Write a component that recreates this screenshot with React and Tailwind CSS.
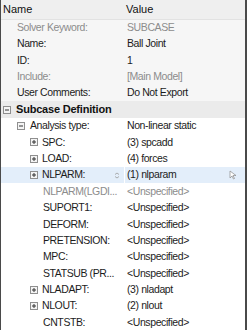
import React from 'react'

const FONT = { fontFamily: '"Liberation Sans", Arial, sans-serif' }

function Expander({ open }) {
  return (
    <svg width="8" height="8" viewBox="0 0 8 8" className="shrink-0">
      <rect x="0.5" y="0.5" width="7" height="7" fill="#f4f4f4" stroke="#8f8f8f" />
      <path d="M2 4h4" stroke="#333" strokeWidth="1" />
      {!open && <path d="M4 2v4" stroke="#333" strokeWidth="1" />}
    </svg>
  )
}

const top = [
  { label: 'Solver Keyword:', value: 'SUBCASE', dim: true },
  { label: 'Name:', value: 'Ball Joint' },
  { label: 'ID:', value: '1' },
  { label: 'Include:', value: '[Main Model]', dim: true },
  { label: 'User Comments:', value: 'Do Not Export' },
]

// children of Analysis type; exp = has a plus box
const subcase = [
  { label: 'SPC:', value: '(3) spcadd', exp: true },
  { label: 'LOAD:', value: '(4) forces', exp: true },
  { label: 'NLPARM:', value: '(1) nlparam', exp: true, selected: true },
  { label: 'NLPARM(LGDI...', value: '<Unspecified>', dim: true },
  { label: 'SUPORT1:', value: '<Unspecified>' },
  { label: 'DEFORM:', value: '<Unspecified>' },
  { label: 'PRETENSION:', value: '<Unspecified>' },
  { label: 'MPC:', value: '<Unspecified>' },
  { label: 'STATSUB (PR...', value: '<Unspecified>' },
  { label: 'NLADAPT:', value: '(3) nladapt', exp: true },
  { label: 'NLOUT:', value: '(2) nlout', exp: true },
  { label: 'CNTSTB:', value: '<Unspecified>' },
]

function Row({ children, value, dim, className = '' }) {
  const tone = dim ? 'text-[#8c8c8c]' : 'text-[#1c1c1c]'
  return (
    <div className={`flex h-[16.4px] items-center ${className}`}>
      <div className={`flex w-[123px] shrink-0 items-center overflow-hidden whitespace-nowrap ${tone}`}>
        {children}
      </div>
      <div className={`flex-1 whitespace-nowrap pl-[3px] ${tone}`}>{value}</div>
    </div>
  )
}

export default function App() {
  return (
    <div
      className="h-[330px] w-[247px] overflow-hidden border-l border-r-2 border-[#4a4a4a] bg-white text-[10.5px] tracking-[-0.4px]"
      style={FONT}
    >
      <div className="flex h-[19.5px] items-center border-b border-[#e2e2e2] bg-[#efefef] text-[11px] tracking-normal text-[#111]">
        <div className="w-[123px] pl-[2px]">Name</div>
        <div className="pl-[2px]">Value</div>
      </div>

      <div className="bg-[#f6f6f6]">
        {top.map(r => (
          <Row key={r.label} value={r.value} dim={r.dim}>
            <span className="pl-[16px]">{r.label}</span>
          </Row>
        ))}
      </div>

      <div className="flex h-[16.4px] items-center gap-[5px] bg-[#ebebeb] pl-[2px] text-[11px] font-bold tracking-[-0.2px] text-[#111]">
        <Expander open />
        <span>Subcase Definition</span>
      </div>

      <Row value="Non-linear static">
        <div className="flex items-center gap-[5px] pl-[16px]">
          <Expander open />
          <span>Analysis type:</span>
        </div>
      </Row>

      {subcase.map(r => (
        <div
          key={r.label}
          className={r.selected ? 'relative bg-[#e3eefa]' : ''}
        >
          <Row value={r.value} dim={r.dim}>
            {r.exp ? (
              <div className="flex items-center gap-[4px] pl-[29px]">
                <Expander />
                <span>{r.label}</span>
              </div>
            ) : (
              <span className="pl-[42px]">{r.label}</span>
            )}
          </Row>
          {r.selected && (
            <>
              <div className="absolute left-[123px] top-0 h-full w-px bg-white" />
              <svg className="absolute left-[113px] top-[5px]" width="6" height="7" viewBox="0 0 6 7">
                <path d="M1 2.5L3 1L5 2.5M1 4.5L3 6L5 4.5" fill="none" stroke="#9a9a9a" strokeWidth="0.8" />
              </svg>
              <svg className="absolute left-[228px] top-[3px]" width="8" height="10" viewBox="0 0 8 10">
                <path d="M1 1v7l2-2 1.5 3 1-.5L4 5.5h3z" fill="#fff" stroke="#8a8a8a" strokeWidth="0.7" />
              </svg>
            </>
          )}
        </div>
      ))}
    </div>
  )
}
